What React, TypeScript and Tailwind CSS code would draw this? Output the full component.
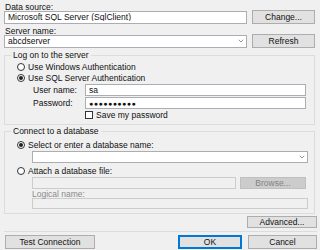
import { ChevronDown } from "lucide-react";
import type { ReactNode } from "react";

function Button({
  children,
  className = "",
  primary = false,
  disabled = false,
}: {
  children: ReactNode;
  className?: string;
  primary?: boolean;
  disabled?: boolean;
}) {
  return (
    <div
      className={`flex items-center justify-center border ${
        disabled
          ? "border-[#bfbfbf] bg-[#cccccc] text-[#838383]"
          : primary
          ? "border-[#0078d7] bg-[#e1e1e1] outline outline-1 -outline-offset-2 outline-[#0078d7]"
          : "border-[#adadad] bg-[#e1e1e1]"
      } ${className}`}
    >
      {children}
    </div>
  );
}

function TextBox({
  value,
  className = "",
  disabled = false,
  combo = false,
}: {
  value?: ReactNode;
  className?: string;
  disabled?: boolean;
  combo?: boolean;
}) {
  return (
    <div
      className={`flex items-center border pl-[3px] ${
        disabled ? "border-[#cccccc] bg-[#f0f0f0]" : "border-[#abadb3] bg-white"
      } ${className}`}
    >
      <span className="flex-1 truncate">{value}</span>
      {combo && (
        <ChevronDown className="mr-[1px] h-[8px] w-[8px] text-[#606060]" strokeWidth={2} />
      )}
    </div>
  );
}

function Radio({ checked = false, label }: { checked?: boolean; label: string }) {
  return (
    <div className="flex h-[8px] items-center gap-[3px]">
      <span className="flex h-[8px] w-[8px] items-center justify-center rounded-full border border-[#333333] bg-white">
        {checked && <span className="h-[4px] w-[4px] rounded-full bg-[#222222]" />}
      </span>
      <span>{label}</span>
    </div>
  );
}

function Group({
  title,
  className = "",
  children,
}: {
  title: string;
  className?: string;
  children: ReactNode;
}) {
  return (
    <div className={`relative w-[311px] border border-[#dcdcdc] ${className}`}>
      <span className="absolute -top-[5px] left-[6px] bg-[#f0f0f0] px-[2px]">{title}</span>
      {children}
    </div>
  );
}

export default function App() {
  return (
    <div className="h-[250px] w-[320px] overflow-hidden bg-[#f0f0f0] font-['Liberation_Sans',Arial,sans-serif] text-[8.5px] leading-none text-[#111111]">
      <div className="flex flex-col pl-[4px] pt-[3px]">
        <div className="h-[7px] pl-[1px]">Data source:</div>
        <div className="flex h-[14px] items-center">
          <TextBox value="Microsoft SQL Server (SqlClient)" className="h-[13px] w-[243px]" />
          <Button className="ml-[5px] h-[14px] w-[63px]">Change...</Button>
        </div>

        <div className="mt-[3px] h-[7px] pl-[1px]">Server name:</div>
        <div className="flex h-[14px] items-center">
          <TextBox value="abcdserver" className="h-[13px] w-[243px]" combo />
          <Button className="ml-[5px] h-[14px] w-[63px]">Refresh</Button>
        </div>

        <Group title="Log on to the server" className="mt-[7px] h-[70px] pl-[12px] pt-[7px]">
          <Radio label="Use Windows Authentication" />
          <div className="mt-[3px]">
            <Radio checked label="Use SQL Server Authentication" />
          </div>
          <div className="mt-[2px] flex items-center">
            <span className="box-content w-[52px] pl-[16px]">User name:</span>
            <TextBox value="sa" className="h-[12px] w-[221px]" />
          </div>
          <div className="mt-[1px] flex items-center">
            <span className="box-content w-[52px] pl-[16px]">Password:</span>
            <TextBox
              value={<span className="text-[7px] tracking-[0.5px]">●●●●●●●●●●</span>}
              className="h-[12px] w-[221px]"
            />
          </div>
          <div className="ml-[68px] mt-[2px] flex h-[8px] items-center gap-[3px]">
            <span className="h-[8px] w-[8px] border border-[#333333] bg-white" />
            <span>Save my password</span>
          </div>
        </Group>

        <Group title="Connect to a database" className="mt-[6px] h-[83px] pl-[12px] pt-[9px]">
          <Radio checked label="Select or enter a database name:" />
          <TextBox className="ml-[15px] mt-[2px] h-[12px] w-[276px]" combo />
          <div className="mt-[4px]">
            <Radio label="Attach a database file:" />
          </div>
          <div className="ml-[15px] mt-[2px] flex items-center">
            <TextBox disabled className="h-[12px] w-[204px]" />
            <Button disabled className="ml-[4px] h-[12px] w-[66px]">
              Browse...
            </Button>
          </div>
          <div className="ml-[15px] mt-[1px] h-[7px] text-[#8a8a8a]">Logical name:</div>
          <TextBox disabled className="ml-[15px] mt-[1px] h-[11px] w-[276px]" />
        </Group>

        <div className="mt-[2px] flex justify-end pr-[3px]">
          <Button className="h-[12px] w-[70px]">Advanced...</Button>
        </div>
        <div className="mr-[3px] mt-[3px] h-[1px] bg-[#dcdcdc]" />

        <div className="mt-[3px] flex items-center pr-[3px]">
          <Button className="ml-[1px] h-[14px] w-[90px]">Test Connection</Button>
          <div className="flex-1" />
          <Button primary className="h-[14px] w-[64px]">
            OK
          </Button>
          <Button className="ml-[6px] h-[14px] w-[69px]">Cancel</Button>
        </div>
      </div>
    </div>
  );
}
